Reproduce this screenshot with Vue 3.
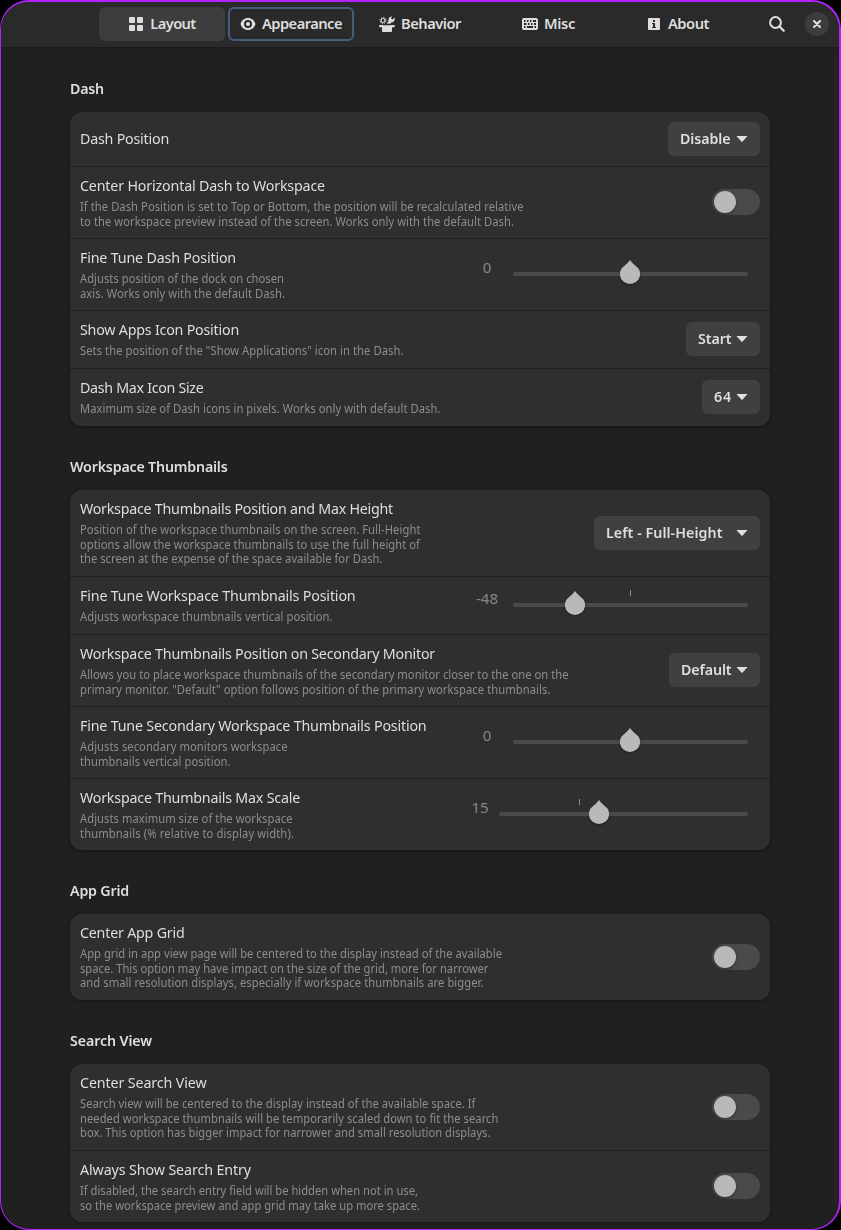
<script setup>
// Text is set slightly condensed; spacing is tuned per line so its right edge lands on the given column.
const vFit = {
  mounted(el, { value, modifiers }) {
    const s = modifiers.plain ? 1 : modifiers.narrow ? 0.91 : 0.95
    const apply = () => {
      el.style.letterSpacing = '0px'
      const w = el.getBoundingClientRect().width
      el.style.letterSpacing = (value - w) / (el.textContent.length * s) + 'px'
    }
    apply()
    document.fonts.ready.then(apply)
  },
}

const tabs = [
  { id: 'layout', label: 'Layout', w: 45.5, state: 'active' },
  { id: 'appearance', label: 'Appearance', w: 80, state: 'focus' },
  { id: 'behavior', label: 'Behavior', w: 60 },
  { id: 'misc', label: 'Misc', w: 31 },
  { id: 'about', label: 'About', w: 41 },
]

const groups = [
  {
    title: 'Dash', w: 34,
    rows: [
      { title: 'Dash Position', w: 89, h: 54, desc: [], menu: 'Disable', mw: 50.5, bw: 92 },
      { title: 'Center Horizontal Dash to Workspace', w: 245, h: 71, toggle: true, desc: [
        ['If the Dash Position is set to Top or Bottom, the position will be recalculated relative', 443.5],
        ['to the workspace preview instead of the screen. Works only with the default Dash.', 434]] },
      { title: 'Fine Tune Dash Position', w: 156, h: 71, slider: { value: '0', width: 235, at: 117 }, desc: [
        ['Adjusts position of the dock on chosen', 204],
        ['axis. Works only with the default Dash.', 205]] },
      { title: 'Show Apps Icon Position', w: 159, h: 57, menu: 'Start', mw: 33.5, bw: 74, desc: [
        ['Sets the position of the "Show Applications" icon in the Dash.', 323.5]] },
      { title: 'Dash Max Icon Size', w: 123.5, h: 57, menu: '64', mw: 18, bw: 58, desc: [
        ['Maximum size of Dash icons in pixels. Works only with default Dash.', 360.5]] },
    ],
  },
  {
    title: 'Workspace Thumbnails', w: 157.5,
    rows: [
      { title: 'Workspace Thumbnails Position and Max Height', w: 313, h: 86, menu: 'Left - Full-Height', mw: 116.5, bw: 166, desc: [
        ['Position of the workspace thumbnails on the screen. Full-Height', 340.5],
        ['options allow the workspace thumbnails to use the full height of', 340],
        ['the screen at the expense of the space available for Dash.', 302.5]] },
      { title: 'Fine Tune Workspace Thumbnails Position', w: 275.5, h: 57, slider: { value: '-48', width: 235, at: 62, tick: 117 }, desc: [
        ['Adjusts workspace thumbnails vertical position.', 252.5]] },
      { title: 'Workspace Thumbnails Position on Secondary Monitor', w: 355, h: 71, menu: 'Default', mw: 50.5, bw: 91, desc: [
        ['Allows you to place workspace thumbnails of the secondary monitor closer to the one on the', 488.5],
        ['primary monitor. "Default" option follows position of the primary workspace thumbnails.', 470.5]] },
      { title: 'Fine Tune Secondary Workspace Thumbnails Position', w: 346.5, h: 71, slider: { value: '0', width: 235, at: 117 }, desc: [
        ['Adjusts secondary monitors workspace', 207.5],
        ['thumbnails vertical position.', 150.5]] },
      { title: 'Workspace Thumbnails Max Scale', w: 220, h: 71, slider: { value: '15', width: 249, at: 100, tick: 80 }, desc: [
        ['Adjusts maximum size of the workspace', 212.5],
        ['thumbnails (% relative to display width).', 214]] },
    ],
  },
  {
    title: 'App Grid', w: 59,
    rows: [
      { title: 'Center App Grid', w: 104.5, h: 86, toggle: true, desc: [
        ['App grid in app view page will be centered to the display instead of the available', 422],
        ['space. This option may have impact on the size of the grid, more for narrower', 408.5],
        ['and small resolution displays, especially if workspace thumbnails are bigger.', 403.5]] },
    ],
  },
  {
    title: 'Search View', w: 82,
    rows: [
      { title: 'Center Search View', w: 126.5, h: 86, toggle: true, desc: [
        ['Search view will be centered to the display instead of the available space. If', 395.5],
        ['needed workspace thumbnails will be temporarily scaled down to fit the search', 418.5],
        ['box. This option has bigger impact for narrower and small resolution displays.', 410.5]] },
      { title: 'Always Show Search Entry', w: 171, h: 71, toggle: true, desc: [
        ['If disabled, the search entry field will be hidden when not in use,', 338],
        ['so the workspace preview and app grid may take up more space.', 340]] },
    ],
  },
]
</script>

<template>
  <div class="window">
    <header class="bar">
      <nav class="tabs">
        <button v-for="t in tabs" :key="t.id" class="tab" :class="[t.state, t.id]">
          <svg v-if="t.id === 'layout'" width="16" height="16" viewBox="0 0 16 16">
            <rect x="1" y="1" width="6" height="6" rx="1" /><rect x="9" y="1" width="6" height="6" rx="1" />
            <rect x="1" y="9" width="6" height="6" rx="1" /><rect x="9" y="9" width="6" height="6" rx="1" />
          </svg>
          <svg v-else-if="t.id === 'appearance'" width="16" height="16" viewBox="0 0 16 16">
            <path fill-rule="evenodd" d="M8 2C4.400 2 1.600 4.300.5 8 1.600 11.700 4.400 14 8 14s6.400-2.300 7.500-6C14.400 4.300 11.600 2 8 2ZM8 4a4 4 0 1 1 0 8 4 4 0 0 1 0-8Z" />
            <circle cx="8" cy="8" r="2.100" />
          </svg>
          <svg v-else-if="t.id === 'behavior'" width="16" height="16" viewBox="0 0 16 16">
            <circle cx="4" cy="4.500" r="2" fill="none" stroke="currentColor" stroke-width="1.200" />
            <circle cx="4" cy="4.500" r="3.200" fill="none" stroke="currentColor" stroke-width="1" stroke-dasharray="1.100 1.413" />
            <path d="M7.600 7.600L9.500 5.200C8.900 2.600 10.600.5 13 .2L12 2.400l1.500 1L15.700 1.400C16.200 4.200 14.600 6.500 12.200 6.500L11.200 7.800Z" />
            <path d="M.3 9h3.200l.8.300h7.400l.8-.300h3.200v2.200H13V15q0 1-1 1H4q-1 0-1-1v-3.800H.3Z" />
          </svg>
          <svg v-else-if="t.id === 'misc'" width="16" height="16" viewBox="0 0 16 16">
            <path fill-rule="evenodd" d="M2 2h12q2 0 2 2v8q0 2-2 2H2q-2 0-2-2V4q0-2 2-2ZM2 4v2h1.500V4ZM5 4v2h1.500V4ZM8 4v2h1.500V4ZM11 4v2h3V4ZM2 7v2h2.500V7ZM6 7v2h1.500V7ZM9 7v2h1.500V7ZM12 7v2h2V7ZM2 10v2h1.500v-2ZM5 10v2h6v-2ZM12.500 10v2H14v-2Z" />
          </svg>
          <svg v-else width="16" height="16" viewBox="0 0 16 16">
            <path fill-rule="evenodd" d="M3 2h10q1 0 1 1v10q0 1-1 1H3q-1 0-1-1V3q0-1 1-1ZM7 4v2h2V4ZM6 7v1h1v3H6v1h4v-1H9V7Z" />
          </svg>
          <span v-fit.plain="t.w">{{ t.label }}</span>
        </button>
      </nav>
      <svg class="search" width="16" height="16" viewBox="0 0 16 16">
        <circle cx="6.500" cy="6.500" r="5.400" fill="none" stroke="currentColor" stroke-width="2" />
        <path d="M10.500 10.500l4.200 4.200" stroke="currentColor" stroke-width="2.300" stroke-linecap="round" />
      </svg>
      <button class="close">
        <svg width="8" height="8" viewBox="0 0 8 8"><path d="M1 1l6 6M7 1L1 7" stroke="currentColor" stroke-width="2" stroke-linecap="round" /></svg>
      </button>
    </header>
    <main class="page">
      <section v-for="g in groups" :key="g.title" class="group">
        <h2><span v-fit="g.w" class="line">{{ g.title }}</span></h2>
        <div class="card">
          <div v-for="(r, i) in g.rows" :key="r.title" class="row" :style="{ height: r.h + (i ? 1 : 0) + 'px' }">
            <div class="text" :class="{ single: !r.desc.length }">
              <div class="title"><span v-fit="r.w" class="line">{{ r.title }}</span></div>
              <div v-if="r.desc.length" class="desc">
                <div v-for="d in r.desc" :key="d[0]"><span v-fit.narrow="d[1]" class="line narrow">{{ d[0] }}</span></div>
              </div>
            </div>
            <button v-if="r.menu" class="menu" :style="{ width: r.bw + 'px' }">
              <span v-fit="r.mw" class="line">{{ r.menu }}</span>
              <svg width="12" height="6" viewBox="0 0 12 6"><path d="M.4 0H11.600L6.600 5.600Q6 6.200 5.400 5.600Z" /></svg>
            </button>
            <div v-if="r.toggle" class="switch"><i></i></div>
            <div v-if="r.slider" class="scale">
              <span class="value" :class="{ tight: r.slider.value === '15' }">{{ r.slider.value }}</span>
              <div class="track" :style="{ width: r.slider.width + 'px' }">
                <i v-if="r.slider.tick" class="tick" :style="{ left: r.slider.tick + 'px' }"></i>
                <svg class="thumb" :style="{ left: r.slider.at - 11 + 'px' }" width="22" height="26" viewBox="0 0 22 26">
                  <path d="M11 1C13 4.300 17 6.800 19.500 9.500A10.100 10.100 0 1 1 2.500 9.500C5 6.800 9 4.300 11 1Z" />
                </svg>
              </div>
            </div>
          </div>
        </div>
      </section>
    </main>
    <div class="scrollbar"></div>
  </div>
</template>

<style>
html, body { background: #000; overflow: hidden; }
</style>

<style scoped>
.window {
  position: relative; box-sizing: border-box; width: 841px; height: 1230px; overflow: hidden;
  border: solid #b223fa; border-width: 2px 2px 1px 1px; border-radius: 29px; background: #202020; color: #dedede;
  font: 15px/20px "Noto Sans", sans-serif; white-space: nowrap;
}
button { font: inherit; color: inherit; border: 0; padding: 0; margin: 0; }
svg { fill: currentColor; flex: none; display: block; }
.line { display: block; width: max-content; transform: scaleX(.95); transform-origin: 0 50%; }
.line.narrow { transform: scaleX(.91); }
.bar { height: 46px; box-sizing: border-box; background: #2a2a2a; border-bottom: 1px solid #1b1b1b; display: flex; align-items: center; padding: 0 10px 2px 98px; }
.tabs { display: flex; gap: 3px; }
.tab { width: 126px; height: 34px; box-sizing: border-box; border-radius: 6px; background: transparent; display: flex; align-items: center; justify-content: center; gap: 6px; font-size: 14.670px; font-weight: 600; }
.tab span { padding-bottom: 1px; }
.tab.active { background: #3d3d3d; }
.tab.focus { border: 2px solid #455e7c; }
.tab.misc, .tab.about { padding-right: 1px; }
.search { margin-left: 28px; }
.close { width: 24px; height: 24px; border-radius: 50%; background: #3d3d3d; display: flex; align-items: center; justify-content: center; margin-left: auto; }
.page { padding: 30px 0 0 69px; }
.group { width: 700px; margin-bottom: 30px; }
h2 { margin: 0 0 14px; font-size: 15px; line-height: 20px; font-weight: 600; }
.card { background: #2f2f2f; border-radius: 12px; box-shadow: 0 1px 3px 1px rgba(0, 0, 0, .13), 0 1px 2px rgba(0, 0, 0, .16); overflow: hidden; }
.row { display: flex; align-items: center; justify-content: space-between; padding: 0 10px 1px; box-sizing: border-box; }
.row + .row { border-top: 1px solid #1f1f1f; }
.text { align-self: flex-start; padding-top: 8px; }
.text.single { padding-top: 16px; }
.desc { font-size: 12.300px; line-height: 14.500px; color: #8d8d8d; margin-top: 5.300px; }
.menu { height: 34px; border-radius: 6px; background: #404040; display: flex; align-items: center; justify-content: space-between; padding: 0 12px; font-weight: 600; box-sizing: border-box; }
.menu .line { padding-bottom: 2px; }
.switch { width: 48px; height: 26px; box-sizing: border-box; border-radius: 13px; background: #4a4a4a; padding: 2px; }
.switch i { display: block; width: 22px; height: 22px; border-radius: 50%; background: #b9b9b9; box-shadow: 0 1px 3px rgba(0, 0, 0, .4); }
.scale { display: flex; align-items: center; padding-right: 12px; }
.value { width: 26px; margin: 0 13px 14px 0; text-align: center; color: #868686; }
.value.tight { width: 18px; margin-right: 10px; }
.track { position: relative; height: 4px; border-radius: 2px; background: #4a4a4a; }
.thumb { position: absolute; top: -13px; fill: #b9b9b9; filter: drop-shadow(0 1px 1px rgba(0, 0, 0, .35)); }
.tick { position: absolute; top: -13px; width: 1px; height: 6px; background: #8c8c8c; }
.scrollbar { position: absolute; right: 2px; top: 53px; bottom: 23px; width: 3px; border-radius: 2px; background: #252525; }
</style>
